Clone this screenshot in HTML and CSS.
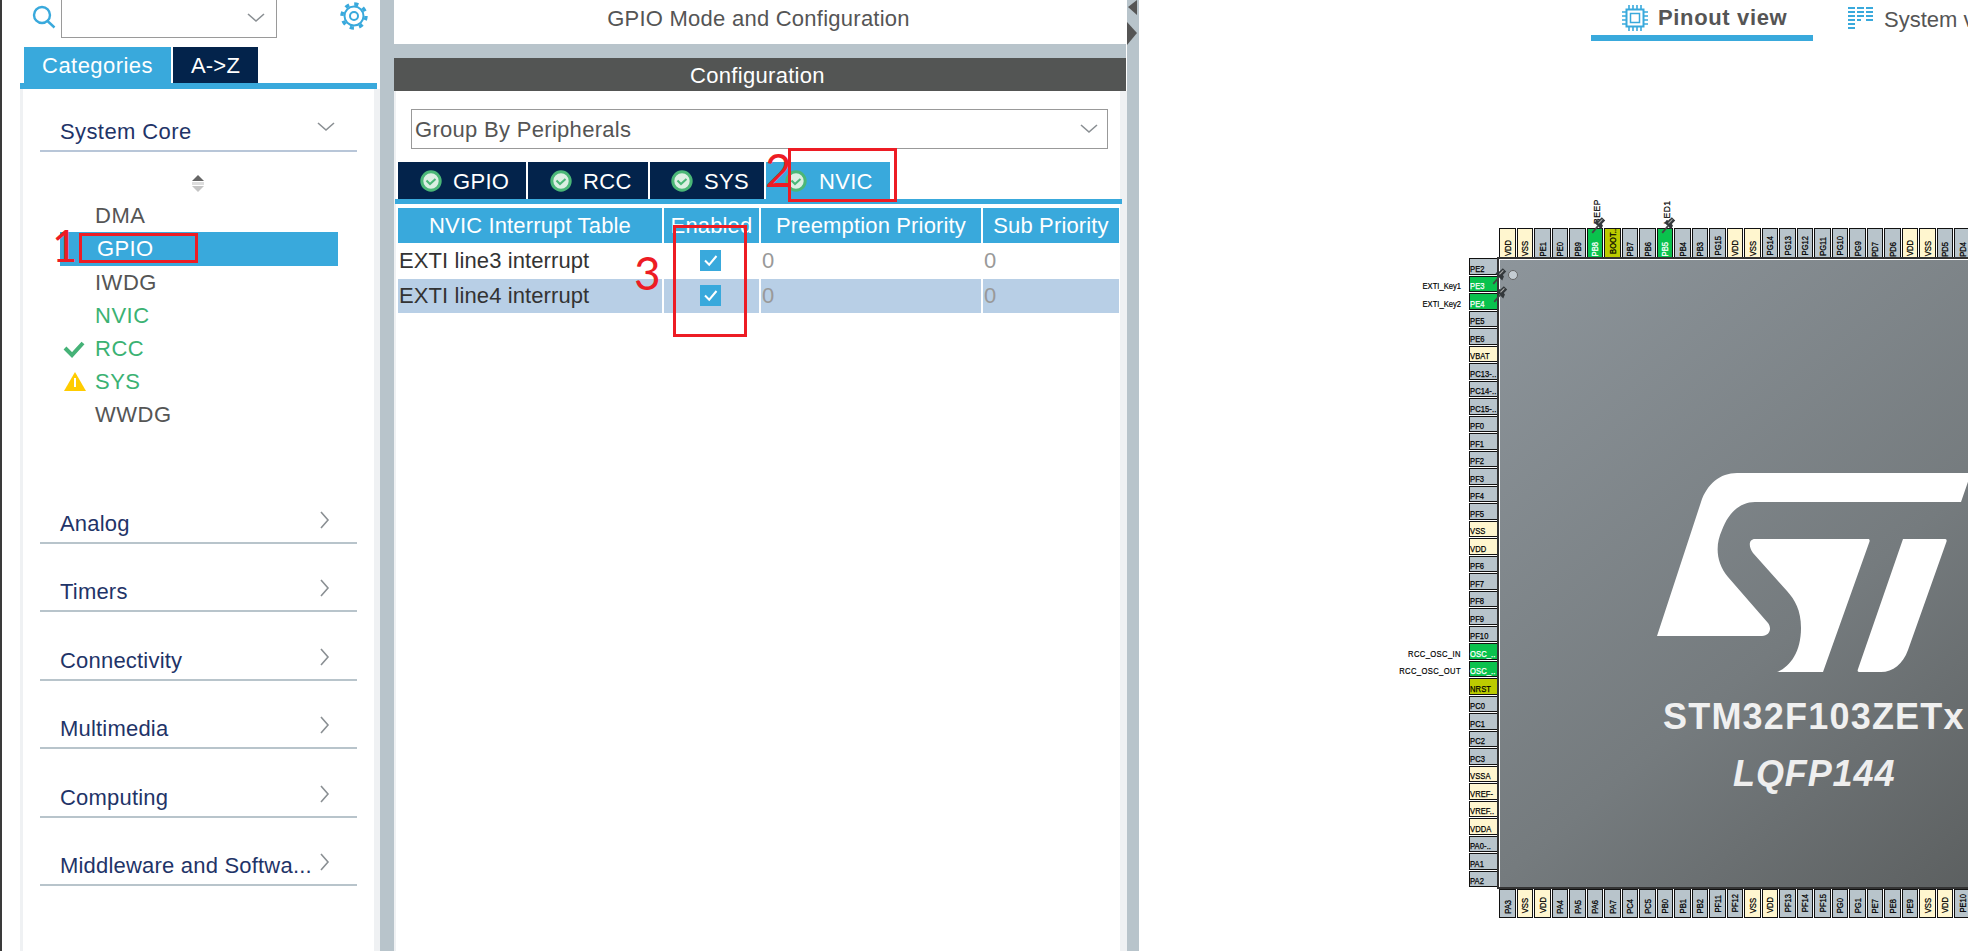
FILE: index.html
```html
<!DOCTYPE html>
<html lang="en">
<head>
<meta charset="utf-8">
<title>GPIO Mode and Configuration</title>
<link rel="stylesheet" href="styles.css">
</head>
<body>
<svg class="defs" width="0" height="0" aria-hidden="true">
  <symbol id="ok" viewBox="0 0 22 22">
    <circle cx="11" cy="11" r="9.2" fill="#dcefe3" stroke="#4bb777" stroke-width="3"/>
    <path d="M6.5 10.5l3.5 3.5 5.5-5" fill="none" stroke="#4bb777" stroke-width="2"/>
  </symbol>
  <symbol id="tick" viewBox="0 0 21 21">
    <rect width="21" height="21" fill="#39a9dc"/>
    <path d="M5 10.5l4.2 4.2L16.5 6" fill="none" stroke="#fff" stroke-width="2"/>
  </symbol>
  <symbol id="tack" viewBox="0 0 16 16">
    <path d="M2 15l5-6" stroke="#444" stroke-width="1.5"/>
    <path d="M4 6l6 6 1.5-3.5-1-1.5 3-3-3-3-3 3-1.5-.5z" fill="#33383b"/>
    <path d="M7.5 6.5l3.5-3.5" stroke="#aaa" stroke-width="1"/>
  </symbol>
  <symbol id="chev-d" viewBox="0 0 18 10">
    <path d="M1 1l8 7 8-7" fill="none" stroke="#8a8f93" stroke-width="1.6"/>
  </symbol>
  <symbol id="chev-r" viewBox="0 0 10 18">
    <path d="M1 1l7 8-7 8" fill="none" stroke="#8a8f93" stroke-width="1.6"/>
  </symbol>
</svg>

<div class="app">
  <aside class="left">
    <div class="searchrow">
      <svg class="searchicon" viewBox="0 0 24 24" width="24" height="24"><circle cx="10" cy="10" r="8" fill="none" stroke="#39a9dc" stroke-width="2.4"/><path d="M15.5 16l7 6.5" stroke="#39a9dc" stroke-width="2.4"/></svg>
      <div class="searchbox"><svg class="chev" width="18" height="10"><use href="#chev-d"/></svg></div>
      <svg class="gear" viewBox="0 0 28 28" width="28" height="28"><circle cx="14" cy="14" r="4" fill="none" stroke="#39a9dc" stroke-width="2"/><circle cx="14" cy="14" r="9.5" fill="none" stroke="#39a9dc" stroke-width="2"/><circle cx="14" cy="14" r="12" fill="none" stroke="#39a9dc" stroke-width="3.4" stroke-dasharray="4.2 5.2"/></svg>
    </div>
    <div class="tabs">
      <div class="tab on">Categories</div>
      <div class="tab">A-&gt;Z</div>
    </div>
    <div class="tabline"></div>
    <div class="catbody">
      <div class="cat first"><span>System Core</span><svg width="18" height="10" class="c-d"><use href="#chev-d"/></svg></div>
      <div class="sublist">
        <svg class="updown" width="14" height="18" viewBox="0 0 14 18"><path d="M7 0l6 6H1z" fill="#666"/><rect x="1" y="7" width="12" height="3" fill="#ddd"/><path d="M7 17l6-6H1z" fill="#c4c4c4"/></svg>
        <div class="item"><i></i>DMA</div>
        <div class="item sel"><i></i>GPIO</div>
        <div class="item"><i></i>IWDG</div>
        <div class="item green"><i></i>NVIC</div>
        <div class="item green"><i><svg width="22" height="18" viewBox="0 0 22 18"><path d="M2 8l7 7L20 3" fill="none" stroke="#45b277" stroke-width="4"/></svg></i>RCC</div>
        <div class="item green"><i><svg width="24" height="20" viewBox="0 0 24 20"><path d="M12 0l11 19H1z" fill="#ffcc00"/><rect x="11" y="6" width="2" height="9" fill="#fff"/></svg></i>SYS</div>
        <div class="item"><i></i>WWDG</div>
      </div>
      <div class="cat"><span>Analog</span><svg width="10" height="18" class="c-r"><use href="#chev-r"/></svg></div>
      <div class="cat"><span>Timers</span><svg width="10" height="18" class="c-r"><use href="#chev-r"/></svg></div>
      <div class="cat"><span>Connectivity</span><svg width="10" height="18" class="c-r"><use href="#chev-r"/></svg></div>
      <div class="cat"><span>Multimedia</span><svg width="10" height="18" class="c-r"><use href="#chev-r"/></svg></div>
      <div class="cat"><span>Computing</span><svg width="10" height="18" class="c-r"><use href="#chev-r"/></svg></div>
      <div class="cat"><span>Middleware and Softwa...</span><svg width="10" height="18" class="c-r"><use href="#chev-r"/></svg></div>
    </div>
  </aside>

  <div class="split"></div>

  <main class="mid">
    <div class="midtitle">GPIO Mode and Configuration</div>
    <div class="midband"></div>
    <div class="confbar">Configuration</div>
    <div class="confbody">
      <div class="select">Group By Peripherals<svg width="18" height="10"><use href="#chev-d"/></svg></div>
      <div class="ctabs">
        <div class="ctab w1"><svg width="22" height="22"><use href="#ok"/></svg>GPIO</div>
        <div class="ctab w2"><svg width="22" height="22"><use href="#ok"/></svg>RCC</div>
        <div class="ctab w3"><svg width="22" height="22"><use href="#ok"/></svg>SYS</div>
        <div class="ctab w4 on"><svg width="22" height="22"><use href="#ok"/></svg>NVIC</div>
      </div>
      <div class="ctabline"></div>
      <div class="table">
        <div class="th">NVIC Interrupt Table</div><div class="th">Enabled</div><div class="th">Preemption Priority</div><div class="th">Sub Priority</div>
        <div class="td name">EXTI line3 interrupt</div><div class="td mid-c"><svg width="21" height="21"><use href="#tick"/></svg></div><div class="td num">0</div><div class="td num">0</div>
        <div class="td alt name">EXTI line4 interrupt</div><div class="td alt mid-c"><svg width="21" height="21"><use href="#tick"/></svg></div><div class="td alt num">0</div><div class="td alt num">0</div>
      </div>
    </div>
  </main>

  <div class="split2">
    <svg width="12" height="46" viewBox="0 0 12 46"><path d="M10 0v15L1 7z" fill="#555"/><path d="M0 22l10 11-10 12z" fill="#555"/></svg>
  </div>

  <section class="right">
    <div class="views">
      <div class="view on">
        <svg width="26" height="26" viewBox="0 0 26 26" fill="none" stroke="#39a9dc"><rect x="4.5" y="4.5" width="17" height="17" stroke-width="2"/><rect x="8.5" y="8.5" width="9" height="9" stroke-width="1.5"/><path d="M7 0v4M11 0v4M15 0v4M19 0v4M7 22v4M11 22v4M15 22v4M19 22v4M0 7h4M0 11h4M0 15h4M0 19h4M22 7h4M22 11h4M22 15h4M22 19h4" stroke-width="1.6"/></svg>
        <span class="vlabel">Pinout view</span>
      </div>
      <div class="view">
        <svg width="26" height="24" viewBox="0 0 26 24" fill="#39a9dc"><path d="M0 0h7v2H0zM0 4h7v2H0zM0 8h7v2H0zM0 12h7v2H0zM0 16h7v2H0zM0 20h7v2H0zM9 0h7v2H9zM9 4h7v2H9zM9 8h7v2H9zM9 12h4v2H9zM18 0h7v2h-7zM18 4h7v2h-7zM18 8h7v2h-7zM18 12h7v2h-7z"/></svg>
        <span class="vlabel">System view</span>
      </div>
    </div>

    <div class="canvas">
      <div class="pinout">
        <div class="corner"></div>
        <div class="pins top">
          <div class="y"><b>VDD</b></div><div class="y"><b>VSS</b></div><div><b>PE1</b></div><div><b>PE0</b></div><div><b>PB9</b></div><div class="g"><b>PB8</b></div><div class="o"><b>BOOT..</b></div><div><b>PB7</b></div><div><b>PB6</b></div><div class="g"><b>PB5</b></div><div><b>PB4</b></div><div><b>PB3</b></div><div><b>PG15</b></div><div class="y"><b>VDD</b></div><div class="y"><b>VSS</b></div><div><b>PG14</b></div><div><b>PG13</b></div><div><b>PG12</b></div><div><b>PG11</b></div><div><b>PG10</b></div><div><b>PG9</b></div><div><b>PD7</b></div><div><b>PD6</b></div><div class="y"><b>VDD</b></div><div class="y"><b>VSS</b></div><div><b>PD5</b></div><div><b>PD4</b></div>
        </div>
        <div class="pins side">
          <div><b>PE2</b></div><div class="g"><b>PE3</b></div><div class="g"><b>PE4</b></div><div><b>PE5</b></div><div><b>PE6</b></div><div class="y"><b>VBAT</b></div><div><b>PC13-..</b></div><div><b>PC14-..</b></div><div><b>PC15-..</b></div><div><b>PF0</b></div><div><b>PF1</b></div><div><b>PF2</b></div><div><b>PF3</b></div><div><b>PF4</b></div><div><b>PF5</b></div><div class="y"><b>VSS</b></div><div class="y"><b>VDD</b></div><div><b>PF6</b></div><div><b>PF7</b></div><div><b>PF8</b></div><div><b>PF9</b></div><div><b>PF10</b></div><div class="g"><b>OSC_..</b></div><div class="g"><b>OSC_..</b></div><div class="o"><b>NRST</b></div><div><b>PC0</b></div><div><b>PC1</b></div><div><b>PC2</b></div><div><b>PC3</b></div><div class="y"><b>VSSA</b></div><div class="y"><b>VREF-</b></div><div class="y"><b>VREF..</b></div><div class="y"><b>VDDA</b></div><div><b>PA0-..</b></div><div><b>PA1</b></div><div><b>PA2</b></div>
        </div>
        <div class="chip">
          <span class="dot"></span>
          <svg class="logo" width="320" height="200" viewBox="1655 473 320 200">
            <path fill="#fff" d="M1980 473H1737C1720 473 1707 484 1701 502L1657 636H1762C1770 636 1772 628 1768 623L1728 577C1716 563 1715 545 1722 530C1728 514 1739 502 1755 502H1961L1971 473Z"/>
            <path fill="#fff" d="M1755 539H1868C1870 539 1870 541 1869 543L1823 672H1777C1790 667 1801 652 1801 628C1801 610 1795 600 1787 591L1753 553C1748 546 1749 539 1755 539Z"/>
            <path fill="#fff" d="M1903 539H1945C1947 539 1947 541 1946 543L1908 650C1903 664 1893 672 1881 672H1859C1858 672 1857 671 1858 669Z"/>
          </svg>
          <div class="chipname">STM32F103ZETx</div>
          <div class="chippack">LQFP144</div>
        </div>
        <div class="corner"></div>
        <div class="pins bottom">
          <div><b>PA3</b></div><div class="y"><b>VSS</b></div><div class="y"><b>VDD</b></div><div><b>PA4</b></div><div><b>PA5</b></div><div><b>PA6</b></div><div><b>PA7</b></div><div><b>PC4</b></div><div><b>PC5</b></div><div><b>PB0</b></div><div><b>PB1</b></div><div><b>PB2</b></div><div><b>PF11</b></div><div><b>PF12</b></div><div class="y"><b>VSS</b></div><div class="y"><b>VDD</b></div><div><b>PF13</b></div><div><b>PF14</b></div><div><b>PF15</b></div><div><b>PG0</b></div><div><b>PG1</b></div><div><b>PE7</b></div><div><b>PE8</b></div><div><b>PE9</b></div><div class="y"><b>VSS</b></div><div class="y"><b>VDD</b></div><div><b>PE10</b></div>
        </div>

        <span class="sig s1">EXTI_Key1</span>
        <span class="sig s2">EXTI_Key2</span>
        <span class="sig s3">RCC_OSC_IN</span>
        <span class="sig s4">RCC_OSC_OUT</span>
        <span class="sig v1">BEEP</span>
        <span class="sig v2">LED1</span>
        <svg class="tack t1" width="18" height="18"><use href="#tack"/></svg>
        <svg class="tack t2" width="18" height="18"><use href="#tack"/></svg>
        <svg class="tack t3" width="18" height="18"><use href="#tack"/></svg>
        <svg class="tack t4" width="18" height="18"><use href="#tack"/></svg>
      </div>
    </div>
  </section>
</div>

<div class="mark box1"></div>
<div class="mark box2"></div>
<div class="mark box3"></div>
<span class="digit d1">1</span>
<span class="digit d2">2</span>
<span class="digit d3">3</span>
</body>
</html>
```
FILE: styles.css
```css
* { box-sizing: border-box; }
html, body { margin: 0; height: 951px; background: #fff; overflow: hidden; }
body { position: relative; font-family: "Liberation Sans", Arial, sans-serif; }
.defs { position: absolute; }
svg { display: block; flex: none; }

.app { display: flex; height: 951px; width: 1968px; }

/* Left panel */
.left { width: 380px; flex: none; border-left: 2px solid #3a3a3a; background: #fff; }
.searchrow { height: 47px; display: flex; align-items: flex-start; }
.searchicon { margin: 5px 0 0 30px; }
.searchbox { width: 216px; height: 39px; margin: -1px 0 0 5px; border: 1px solid #9a9a9a; border-top: 0; display: flex; justify-content: flex-end; align-items: center; padding: 0 11px 0 0; }
.gear { margin: 2px 0 0 63px; }
.tabs { display: flex; gap: 2px; padding-left: 22px; height: 36px; }
.tab { background: #03234b; color: #fff; font-size: 22px; width: 85px; display: flex; align-items: center; justify-content: center; letter-spacing: .2px; padding-top: 2px; }
.tab.on { background: #39a9dc; width: 147px; letter-spacing: .45px; }
.tabline { margin-left: 18px; width: 357px; height: 6px; background: #39a9dc; }
.catbody { margin-left: 18px; width: 360px; height: 862px; border-left: 3px solid #eff1f3; border-right: 6px solid #eff1f3; padding: 0 17px 0 17px; }
.cat { height: 68.4px; border-bottom: 2px solid #b8c4cb; display: flex; align-items: flex-end; justify-content: space-between; padding: 0 20px 5px 20px; color: #1f3468; font-size: 22px; letter-spacing: .2px; line-height: 26px; }
.cat.first { height: 63px; border-bottom-color: #b8c6d8; letter-spacing: .4px; }
.cat span { white-space: nowrap; }
.c-d { margin: 0 2px 13px 0; }
.c-r { margin: 0 7px 8px 0; }
.sublist { height: 323.6px; padding: 23px 0 0 20px; }
.updown { margin: 0 0 6px 131px; }
.item { height: 33px; width: 278px; display: flex; align-items: center; font-size: 22px; color: #555; letter-spacing: .5px; }
.item i { width: 35px; flex: none; display: flex; padding-left: 3px; }
.item.sel { background: #39a9dc; color: #fff; padding-left: 2px; height: 34px; letter-spacing: .4px; }
.item.green { color: #3bb273; }

.split { width: 14px; flex: none; background: #b8c4cb; }

/* Middle panel */
.mid { width: 733px; flex: none; display: flex; flex-direction: column; }
.midtitle { height: 44px; padding-bottom: 6px; display: flex; align-items: center; justify-content: center; color: #555; font-size: 22px; letter-spacing: .25px; padding-right: 4px; }
.midband { height: 14px; background: #b8c4cb; margin-right: 1px; }
.confbar { height: 33px; background: #535554; color: #fff; font-size: 22px; display: flex; align-items: center; justify-content: center; margin-right: 1px; letter-spacing: .3px; padding: 2px 5px 0 0; }
.confbody { flex: 1; border-left: 2px solid #eff1f3; border-right: 7px solid #eff1f3; padding: 18px 0 0 1px; }
.select { margin-left: 14px; width: 697px; height: 40px; border: 1px solid #999; display: flex; align-items: center; justify-content: space-between; padding: 2px 9px 0 3px; color: #555; font-size: 22px; letter-spacing: .3px; }
.select svg { margin-top: -2px; }
.ctabs { display: flex; gap: 2px; margin: 13px 0 0 1px; height: 37px; }
.ctab { background: #03234b; color: #fff; font-size: 22px; display: flex; align-items: center; gap: 11px; padding-left: 22px; letter-spacing: .3px; line-height: 26px; }
.ctab svg { margin-top: -1px; }
.ctab { padding-top: 2px; }
.ctab.w1 { width: 128px; }
.ctab.w2 { width: 120px; padding-left: 22px; }
.ctab.w3 { width: 114px; padding-left: 21px; }
.ctab.w4 { width: 124px; padding-left: 19px; background: #39a9dc; gap: 12px; }
.ctabline { height: 5px; background: #39a9dc; margin-left: -2px; width: 727px; }
.table { display: grid; grid-template-columns: 264px 95px 220px 136px; column-gap: 2px; grid-template-rows: 35px 33px 33px; row-gap: 2px; margin: 4px 0 0 1px; padding-bottom: 2px; }
.table { width: 723px; }
.th { background: #39a9dc; color: #fff; font-size: 22px; display: flex; align-items: center; justify-content: center; letter-spacing: .15px; white-space: nowrap; overflow: hidden; }
.td { display: flex; align-items: center; font-size: 22px; padding-left: 1px; color: #333; background: #fff; margin-top: -1px; letter-spacing: .1px; }
.td.alt { background: #b8cfe6; }
.td.mid-c { justify-content: center; padding: 0 2px 2px 0; }
.td.num { color: #999; }

.split2 { width: 12px; flex: none; background: #b8c4cb; }

/* Right panel */
.right { flex: 1; display: flex; flex-direction: column; overflow: hidden; min-width: 0; }
.views { height: 41px; display: flex; padding-left: 452px; flex: none; }
.view { display: flex; flex: none; align-items: center; gap: 10px; font-size: 22px; color: #555; white-space: nowrap; height: 41px; padding: 0 0 3px 31px; width: 222px; margin-right: 25px; }
.view.on { font-weight: bold; border-bottom: 6px solid #39a9dc; color: #555; letter-spacing: .65px; padding-bottom: 0; }
.view:not(.on) { padding-left: 10px; }
.vlabel { padding-top: 1px; }

.canvas { flex: 1; position: relative; }
.pinout { position: absolute; left: 330px; top: 187px; display: grid; grid-template-columns: 28px 600px; grid-template-rows: 29px 632px 29px; }
.corner { width: 28px; }
.pins { display: grid; font-size: 9.5px; color: #000; }
.pins > div { background: #b8c4cb; border: 1.5px solid #111; }
.pins b { font-weight: normal; white-space: nowrap; display: block; -webkit-text-stroke: .25px currentColor; }
.pins .y { background: #fff6cf; }
.pins .g { background: #0ac24d; color: #fff; }
.pins .o { background: #bccb00; color: #000; }
.top, .bottom { grid-template-columns: repeat(27, 16.5px); column-gap: 1px; padding-left: 2px; }
.top > div, .bottom > div { display: flex; justify-content: center; align-items: flex-end; }
.top b, .bottom b { writing-mode: vertical-rl; transform: rotate(180deg) scaleY(.8); transform-origin: 50% 100%; line-height: 13px; translate: 0 -100%; }
.side { grid-template-rows: repeat(36, 16.5px); row-gap: 1px; padding-top: 1px; margin-right: -1px; position: relative; width: 29px; }
.side > div { display: flex; align-items: flex-end; }
.side b { line-height: 11px; transform: scaleX(.8); transform-origin: 0 50%; letter-spacing: .1px; }
.chip { position: relative; overflow: hidden; background: linear-gradient(140deg, #8d959b 0%, #757b7e 55%, #565959 100%); border: 2px solid #333; box-shadow: inset 1px 1px 0 #fff; height: 632px; width: 600px; }
.dot { position: absolute; left: 9px; top: 11px; width: 10px; height: 10px; border-radius: 50%; background: #c4ccd2; border: 1px solid #666; }
.logo { position: absolute; left: 156px; top: 214px; }
.chipname { position: absolute; left: 164px; top: 436px; font-size: 36px; font-weight: bold; color: #f0f0f0; letter-spacing: 1.2px; white-space: nowrap; line-height: 44px; }
.chippack { position: absolute; left: 234px; top: 493px; font-size: 36px; font-weight: bold; font-style: italic; color: #eee; letter-spacing: .9px; line-height: 44px; white-space: nowrap; }

.sig { position: absolute; font-size: 9.5px; color: #000; white-space: nowrap; line-height: 10px; text-align: right; width: 90px; left: -98px; transform: scaleX(.8); transform-origin: 100% 50%; -webkit-text-stroke: .2px #000; }
.s1 { top: 53px; }
.s2 { top: 71px; }
.s3 { top: 421px; letter-spacing: .5px; }
.s4 { top: 438px; letter-spacing: .5px; }
.v1, .v2 { writing-mode: vertical-rl; transform: rotate(180deg) scaleY(.9); transform-origin: 50% 50%; width: 10px; height: 22px; top: -25px; left: 123px; text-align: left; letter-spacing: .6px; }
.v2 { left: 193px; }
.tack { position: absolute; }
.t1 { left: 22px; top: 39px; }
.t2 { left: 23px; top: 57px; }
.t3 { left: 121px; top: -12px; }
.t4 { left: 191px; top: -12px; }

/* Red hand annotations */
.mark { position: absolute; border: 3px solid #ed1c24; }
.box1 { left: 79px; top: 233px; width: 119px; height: 30px; }
.box2 { left: 788px; top: 148px; width: 109px; height: 54px; }
.box3 { left: 673px; top: 225px; width: 74px; height: 112px; }
.digit { position: absolute; font-family: Lato, sans-serif; font-size: 46px; color: #ed1c24; line-height: 46px; }
.d1 { left: 52px; top: 222px; font-size: 44px; }
.d2 { left: 765px; top: 147px; }
.d3 { left: 634px; top: 250px; }
```
